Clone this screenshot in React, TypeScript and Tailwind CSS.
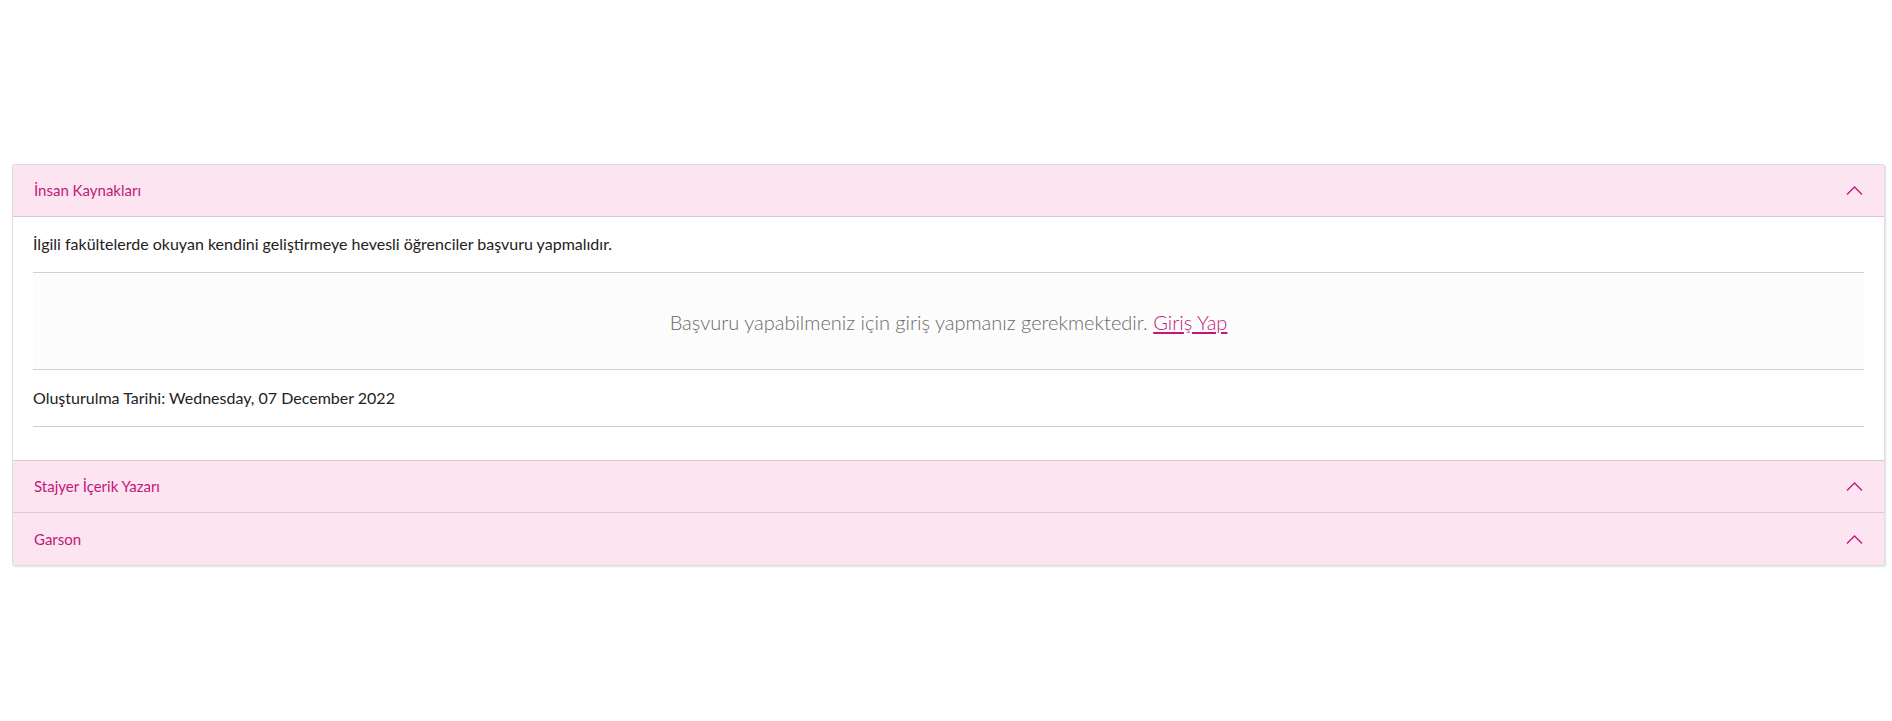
import React from "react";

const Chevron = () => (
  <svg width="17" height="9" viewBox="0 0 17 9" fill="none" className="block">
    <path d="M1 8.5 L8.5 1 L16 8.5" stroke="#c2187a" strokeWidth="1.3" />
  </svg>
);

const Header = ({ title, last }: { title: string; last?: boolean }) => (
  <div
    className={
      "flex h-[52px] items-center justify-between bg-[#fce4f1] pl-[21px] pr-[21px] " +
      (last ? "" : "border-b border-[#dcc8d4]")
    }
  >
    <span className="text-[15px] text-[#c2187a]">{title}</span>
    <Chevron />
  </div>
);

export default function App() {
  return (
    <div
      className="min-h-[721px] bg-white pt-[164px] px-[12px]"
      style={{ fontFamily: "Lato, 'Noto Sans', sans-serif" }}
    >
      <div className="w-[1873px] border border-[#e0dde0] rounded-[2px] shadow-[1px_1px_2px_rgba(0,0,0,0.12)] overflow-hidden">
        <Header title="İnsan Kaynakları" />
        <div className="bg-white px-[20px] pt-[16px] pb-[33px] border-b border-[#dcc8d4]">
          <p className="text-[16px] leading-[22px] text-[#222]">
            İlgili fakültelerde okuyan kendini geliştirmeye hevesli öğrenciler başvuru yapmalıdır.
          </p>
          <div className="mt-[17px] border-t border-[#cfcfcf]" />
          <div className="mt-[1px] flex h-[95px] items-center justify-center bg-[#fcfcfc]">
            <span className="text-[20px] font-light text-[#6a6a6a]">
              Başvuru yapabilmeniz için giriş yapmanız gerekmektedir.{" "}
              <a className="text-[#c2187a] underline underline-offset-2">Giriş Yap</a>
            </span>
          </div>
          <div className="border-t border-[#cfcfcf]" />
          <div className="flex h-[56px] items-center text-[16px] text-[#222]">
            Oluşturulma Tarihi: Wednesday, 07 December 2022
          </div>
          <div className="border-t border-[#cfcfcf]" />
        </div>
        <Header title="Stajyer İçerik Yazarı" />
        <Header title="Garson" last />
      </div>
    </div>
  );
}
